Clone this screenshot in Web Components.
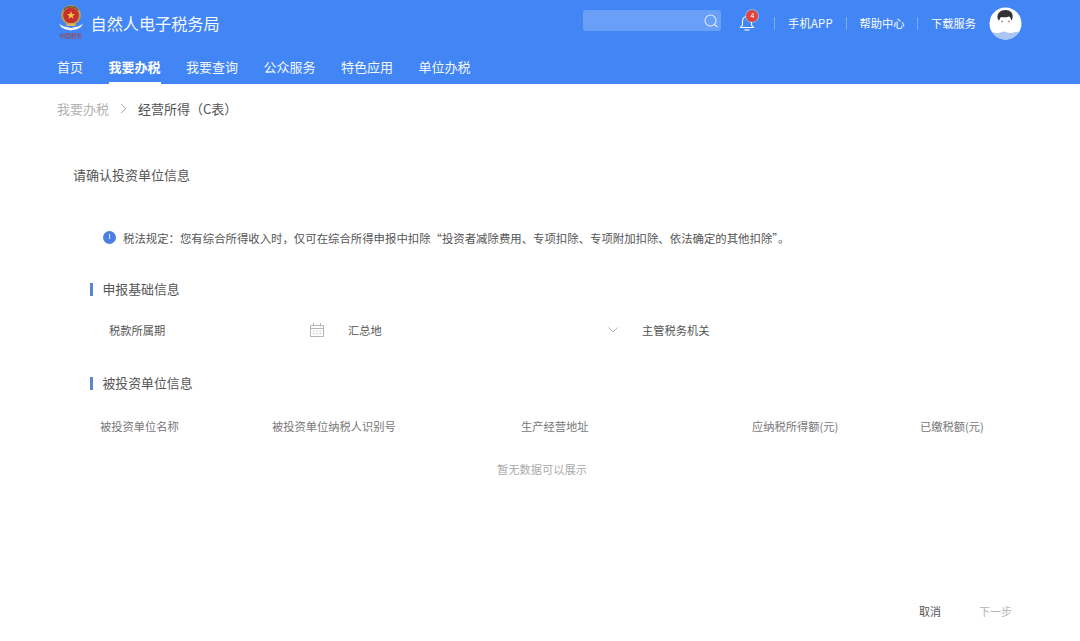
<!DOCTYPE html>
<html lang="zh-CN"><head><meta charset="utf-8"><title>自然人电子税务局</title>
<style>
html,body{margin:0;padding:0;height:100%;background:#fff}
body{font-family:"Noto Sans CJK SC","Liberation Sans",sans-serif;color:#555;overflow:hidden}
</style></head><body>
<tax-page>
  <app-header></app-header>
  <bread-crumb parent="我要办税" current="经营所得（C表）"></bread-crumb>
  <page-title>请确认投资单位信息</page-title>
  <notice-bar>税法规定：您有综合所得收入时，仅可在综合所得申报中扣除“投资者减除费用、专项扣除、专项附加扣除、依法确定的其他扣除”。</notice-bar>
  <section-title style="margin-top:33px">申报基础信息</section-title>
  <field-row></field-row>
  <section-title style="margin-top:35px">被投资单位信息</section-title>
  <data-table></data-table>
  <footer-actions></footer-actions>
</tax-page>
<script>
function def(name,html){customElements.define(name,class extends HTMLElement{constructor(){super();this.attachShadow({mode:'open'})}
 connectedCallback(){this.shadowRoot.innerHTML=typeof html==='function'?html(this):html}})}

def('tax-page',`<style>:host{display:flex;flex-direction:column;height:641px}</style><slot></slot>`);

def('app-header',`<style>
:host{display:block;height:84px;background:#4285f4;color:#fff;box-sizing:border-box;padding:0 58px 0 57px}
.top{display:flex;align-items:center;height:48px}
.logo{display:block;width:30px;height:40px;margin:0 4px 0 0}
.name{font-size:16.15px;line-height:48px;color:#f6f9ff;margin:-2px 0 0 -.5px}
.search{margin-left:auto;width:138px;height:21px;margin-top:-7px;background:#6a9ff7;border-radius:3px;display:flex;align-items:center;justify-content:flex-end;padding-right:1px;box-sizing:border-box}
.bell{position:relative;margin:-3px 0 0 17px;width:18px;height:20px;display:block}
.badge{position:absolute;left:8px;top:-3px;width:12px;height:12px;border-radius:50%;background:#e0433b;font-size:7px;line-height:12px;text-align:center;color:#fff;font-family:"Liberation Sans",sans-serif;box-shadow:0 0 0 1px rgba(255,255,255,.35)}
.links{display:flex;align-items:center;margin-left:18px;font-size:11.25px;color:#fff;margin-top:-2px}
.links span{padding:0 13px 0 12.5px;border-left:1px solid #7dabf8;line-height:13px;white-space:nowrap}
.links span:first-child{letter-spacing:.3px}
.avatar{display:block;width:33px;height:33px;margin:-1px 0 0 0}
nav{display:flex;gap:25.5px;height:36px;font-size:13px;line-height:38px}
nav a{display:block;color:#f4f8ff;box-sizing:border-box;height:36px}
nav a.on{font-weight:700;color:#fff;border-bottom:2px solid #fff}
</style>
<div class="top">
<svg class="logo" viewBox="0 0 30 40" aria-hidden="true">
<circle cx="14" cy="11" r="10" fill="#b99a5a"/><circle cx="14" cy="11.500" r="7.800" fill="#c92f2a"/>
<path d="M14 7l1.100 3h3l-2.400 1.900.9 3-2.600-1.800-2.600 1.800.9-3-2.400-1.900h3z" fill="#efc24a"/>
<path d="M7 6.500c2-5 12-5 14 0" fill="none" stroke="#6f5a3a" stroke-width="1.600"/>
<path d="M2 19.500c4 3.500 8 3.500 12 4.500 4-1 8-1 12-4.500-1.500 4.500-6 6-10 6.500-1.200.5-2.800.5-4 0-4-.5-8.500-2-10-6.500z" fill="#f4f6fb"/>
<rect x="9.500" y="19.500" width="9" height="2.500" fill="#dfb35c"/>
<text x="2.500" y="34" font-size="5.800" fill="#a0423f" font-family="Noto Sans CJK SC,sans-serif" textLength="23">中国税务</text>
</svg>
<div class="name">自然人电子税务局</div>
<div class="search"><svg width="18" height="18" viewBox="0 0 18 18" fill="none" stroke="#dce9ff" stroke-width="1.100"><circle cx="8.500" cy="8.500" r="5.500"/><path d="M12.500 12.500l3 2.500"/></svg></div>
<div class="bell"><svg width="18" height="20" viewBox="0 0 18 20" fill="none" stroke="#fff" stroke-width="1.100"><path d="M9 3.500c-3 0-4.500 2.200-4.500 5v3.500L2.500 14.500h13L13.500 12V8.500c0-2.800-1.500-5-4.500-5z"/><path d="M6.500 17h5"/></svg><div class="badge">4</div></div>
<div class="links"><span>手机APP</span><span>帮助中心</span><span>下载服务</span></div>
<svg class="avatar" viewBox="0 0 33 33" aria-hidden="true"><defs><clipPath id="c"><circle cx="16.500" cy="16.500" r="16"/></clipPath></defs><g clip-path="url(#c)"><rect width="33" height="33" fill="#fff"/><path d="M0 26c5-2 6 1 10 0s4-2 6.500-1 5 1.500 8 .5 5-1 8.500 0v9H0z" fill="#a9c6f5"/><path d="M8.500 11c-.5-5 3-8 8-8s8 3 7 8c-.2 1.500-.8 2-1.300 2.500-.2-2-1-3.500-2.200-4-2.500 1-6 1-8 .5-.8 1-1.400 2-1.800 3.500-.8-.5-1.500-1.300-1.700-2.500z" fill="#333"/><circle cx="13" cy="14.500" r="1" fill="#c08a8a"/><circle cx="20" cy="14.500" r="1" fill="#c08a8a"/></g></svg>
</div>
<nav><a>首页</a><a class="on">我要办税</a><a>我要查询</a><a>公众服务</a><a>特色应用</a><a>单位办税</a></nav>`);

def('bread-crumb',el=>`<style>:host{display:flex;align-items:center;height:48px;padding-left:57px;font-size:13px;color:#b2b2b2}
svg{margin:0 11px 0 11px}b{font-weight:400;color:#555}</style>
<span>${el.getAttribute('parent')||''}</span><svg width="7" height="11" viewBox="0 0 7 11" fill="none" stroke="#aaa"><path d="M1 1l5 4.500-5 4.500"/></svg><b>${el.getAttribute('current')||''}</b>`);

def('page-title',`<style>:host{display:block;padding:33px 0 0 73px;font-size:13px;line-height:20px;color:#555}</style><slot></slot>`);

def('notice-bar',`<style>:host{display:flex;align-items:center;padding:43px 0 0 103px;font-size:11.4px;line-height:20px;color:#555;white-space:nowrap}
svg{margin:-2px 7px 0 0;flex:none}</style>
<svg width="13" height="13" viewBox="0 0 13 13"><circle cx="6.500" cy="6.500" r="6.500" fill="#4a80e0"/><rect x="6" y="3" width="1.100" height="5" fill="#cfe0ff"/></svg><slot></slot>`);

def('section-title',`<style>:host{display:flex;align-items:center;margin-left:90px;font-size:12.86px;line-height:16px;color:#555}
i{display:block;width:3px;height:13px;background:#5b86c8;margin-right:9.500px}</style><i></i><slot></slot>`);

def('field-row',`<style>:host{display:flex;align-items:center;height:20px;margin:23px 0 0 109px;font-size:11.25px;color:#555;line-height:20px}
.a{display:flex;justify-content:space-between;align-items:center;margin-right:24px;width:215px}
.b{width:270px;display:flex;justify-content:space-between;align-items:center;margin-right:24px}
</style>
<div class="a"><span>税款所属期</span><svg width="14" height="14" viewBox="0 0 14 14" fill="none" stroke="#b5b5b5" stroke-width="1"><path d="M.500 2.500h13v11H.500zM.500 5.500h13M3.500 0v3.500M10.500 0v3.500"/><path d="M3 8h1.500M6.300 8h1.500M9.500 8H11M3 10.800h1.500M6.300 10.800h1.500M9.500 10.800H11" stroke-width=".9"/></svg></div>
<div class="b"><span>汇总地</span><svg width="10" height="6" viewBox="0 0 10 6" fill="none" stroke="#b5b5b5"><path d="M.500.500L5 5l4.500-4.500"/></svg></div>
<div>主管税务机关</div>`);

def('data-table',`<style>:host{display:block;margin:25px 0 0 0;font-size:11.25px;color:#777;line-height:20px}
.h{display:grid;grid-template-columns:172px 249px 231px 168px 1fr;padding-left:100px;white-space:nowrap}
.e{margin-top:23px;padding-left:497px;color:#aaa}
</style>
<div class="h"><span>被投资单位名称</span><span>被投资单位纳税人识别号</span><span>生产经营地址</span><span>应纳税所得额(元)</span><span>已缴税额(元)</span></div>
<div class="e">暂无数据可以展示</div>`);

def('footer-actions',`<style>:host{display:flex;justify-content:flex-end;gap:38px;padding:0 68px 20px 0;font-size:11px;line-height:20px;color:#555;margin-top:auto}
.n{color:#b5b5b5}</style><span>取消</span><span class="n">下一步</span>`);
</script>
</body></html>
